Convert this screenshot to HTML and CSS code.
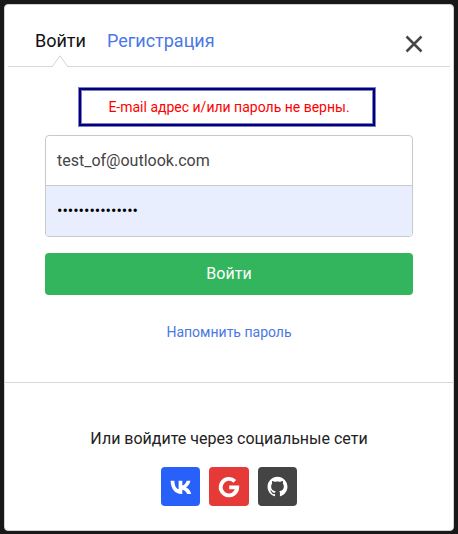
FILE: index.html
```html
<!DOCTYPE html>
<html lang="ru">
<head>
<meta charset="utf-8">
<title>Войти</title>
<link rel="stylesheet" href="styles.css">
</head>
<body>
<main class="dialog">
  <header class="header">
    <nav class="tabs">
      <span class="tab tab-active">Войти</span>
      <a class="tab tab-link">Регистрация</a>
    </nav>
    <svg class="close" viewBox="0 0 18 18" width="18" height="18"><path d="M1.500 1.500l15 15M16.500 1.500l-15 15" fill="none" stroke="#484848" stroke-width="2.500"/></svg>
    <svg class="pointer" viewBox="0 0 18 12" width="18" height="12"><path d="M1 12L9 1L17 12z" fill="#fff"/><path d="M0 11.500H1.200L9 .8L16.800 11.500H18" fill="none" stroke="#d4d4d4"/></svg>
  </header>
  <section class="login">
    <div class="error">E-mail адрес и/или пароль не верны.</div>
    <div class="fields">
      <div class="field">test_of@outlook.com</div>
      <div class="field password">•••••••••••••••</div>
    </div>
    <div class="submit">Войти</div>
    <a class="remind">Напомнить пароль</a>
  </section>
  <section class="social">
    <div class="social-title">Или войдите через социальные сети</div>
    <div class="social-list">
      <a class="network vk"><svg viewBox="0 0 39 39" width="39" height="39"><path fill="#fff" d="M20.600 27C14 27 9.900 22.200 9.600 13.800H13.400C13.500 19.400 15.600 21.800 17.600 22.300V13.800H21.300V18.600C23.200 18.400 25 16.400 25.700 13.800H29.400C28.800 16.800 26.900 19.200 25 20.300C26.900 21.200 29.300 23.400 30.200 27H26.200C25.400 24.700 23.600 23 21.300 22.700V27z"/></svg></a>
      <a class="network google"><svg viewBox="0 0 40 39" width="40" height="39"><path d="M25.800 14.300A8.250 8.250 0 1 0 28.200 20.400H20.200" fill="none" stroke="#fff" stroke-width="3.900"/></svg></a>
      <a class="network github"><svg viewBox="-11.500 -11.500 47 47" width="39" height="39"><path fill="#fff" d="M12 .297c-6.630 0-12 5.373-12 12 0 5.303 3.438 9.800 8.205 11.385.6.113.82-.258.82-.577 0-.285-.01-1.040-.015-2.040-3.338.724-4.042-1.610-4.042-1.610C4.422 18.070 3.633 17.700 3.633 17.700c-1.087-.744.084-.729.084-.729 1.205.084 1.838 1.236 1.838 1.236 1.070 1.835 2.809 1.305 3.495.998.108-.776.417-1.305.76-1.605-2.665-.3-5.466-1.332-5.466-5.930 0-1.310.465-2.380 1.235-3.220-.135-.303-.54-1.523.105-3.176 0 0 1.005-.322 3.300 1.230.96-.267 1.980-.399 3-.405 1.020.006 2.040.138 3 .405 2.280-1.552 3.285-1.230 3.285-1.230.645 1.653.24 2.873.12 3.176.765.840 1.230 1.910 1.230 3.220 0 4.610-2.805 5.625-5.475 5.920.42.360.81 1.096.81 2.220 0 1.606-.015 2.896-.015 3.286 0 .315.21.690.825.570C20.565 22.092 24 17.592 24 12.297c0-6.627-5.373-12-12-12"/></svg></a>
    </div>
  </section>
</main>
</body>
</html>
```
FILE: styles.css
```css
* { box-sizing: border-box; }
body {
  margin: 0;
  padding: 4px 4px 3px;
  height: 534px;
  background: #191818;
  font-family: Roboto, "Liberation Sans", sans-serif;
}
.dialog {
  height: 527px;
  border: 1px solid #d2d2d2;
  border-radius: 4px;
  background: #fff;
}
.header {
  position: relative;
  display: flex;
  justify-content: space-between;
  height: 62px;
  margin: 0 3px;
  padding: 0 27px;
  border-bottom: 1px solid #d8d8d8;
}
.tabs {
  display: flex;
  gap: 21px;
  padding-top: 25px;
  font-size: 18px;
  line-height: 22px;
}
.tab-active { color: #111; }
.tab-link, .remind { color: #4a78e5; }
.close { margin: 30px 0 0; }
.pointer {
  position: absolute;
  left: 43px;
  bottom: -1px;
}
.login {
  display: flex;
  flex-direction: column;
  align-items: center;
  height: 316px;
  padding: 20px 40px 0;
  border-bottom: 1px solid #d8d8d8;
}
.error {
  width: 298px;
  height: 40px;
  margin-left: -4px;
  border: 1px solid #7f7fbf;
  box-shadow: inset 0 0 0 2px #00007f, inset 0 0 0 3px #7f7fbf;
  color: #ff0000;
  font-size: 14px;
  line-height: 38px;
  text-align: center;
  padding-left: 4px;
}
.fields {
  width: 100%;
  height: 102px;
  margin-top: 8px;
  border: 1px solid #c9c9c9;
  border-radius: 4px;
  overflow: hidden;
}
.field {
  height: 49px;
  padding-left: 11px;
  color: #444;
  font-size: 16px;
  line-height: 49px;
}
.password {
  height: 51px;
  border-top: 1px solid #c9c9c9;
  background: #e8eefe;
  color: #000;
}
.submit {
  width: 100%;
  height: 42px;
  margin-top: 16px;
  border-radius: 4px;
  background: #33b55d;
  color: #fff;
  font-size: 16px;
  line-height: 41px;
  text-align: center;
}
.remind {
  margin-top: 27px;
  font-size: 14px;
  line-height: 20px;
}
.social {
  padding-top: 45px;
  text-align: center;
}
.social-title {
  color: #222;
  font-size: 16px;
  line-height: 22px;
}
.social-list {
  display: flex;
  justify-content: center;
  gap: 9px;
  margin-top: 17px;
}
.network {
  height: 39px;
  border-radius: 4px;
  overflow: hidden;
}
.network svg { display: block; }
.vk { background: #2860fa; }
.google { background: #e53a37; }
.github { background: #444; }
```
